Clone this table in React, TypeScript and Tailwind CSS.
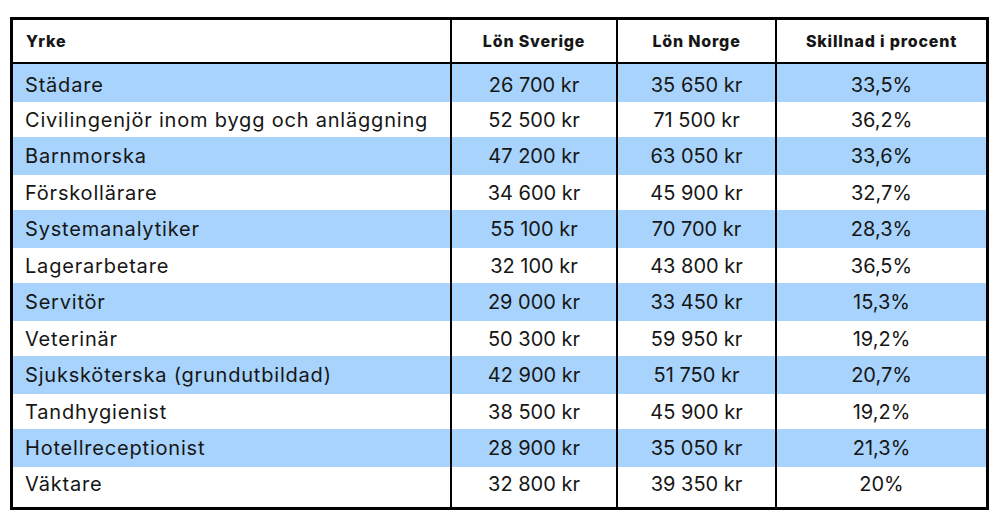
const rows = [
  ["Städare", "26 700 kr", "35 650 kr", "33,5%"],
  ["Civilingenjör inom bygg och anläggning", "52 500 kr", "71 500 kr", "36,2%"],
  ["Barnmorska", "47 200 kr", "63 050 kr", "33,6%"],
  ["Förskollärare", "34 600 kr", "45 900 kr", "32,7%"],
  ["Systemanalytiker", "55 100 kr", "70 700 kr", "28,3%"],
  ["Lagerarbetare", "32 100 kr", "43 800 kr", "36,5%"],
  ["Servitör", "29 000 kr", "33 450 kr", "15,3%"],
  ["Veterinär", "50 300 kr", "59 950 kr", "19,2%"],
  ["Sjuksköterska (grundutbildad)", "42 900 kr", "51 750 kr", "20,7%"],
  ["Tandhygienist", "38 500 kr", "45 900 kr", "19,2%"],
  ["Hotellreceptionist", "28 900 kr", "35 050 kr", "21,3%"],
  ["Väktare", "32 800 kr", "39 350 kr", "20%"],
];

const cols = "grid grid-cols-[437px_2px_164px_2px_157px_2px_209px]";

function Divider() {
  return <div className="h-full bg-black" />;
}

export default function App() {
  return (
    <div className="w-[1000px] h-[526px] bg-white pt-[17px] pl-[10px] font-['Inter',sans-serif] text-[#161616]">
      <div className="w-[979px] border-[3px] border-black">
        <div className={`${cols} h-[42px] items-center text-[16px] font-extrabold tracking-[0.05em]`}>
          <div className="pl-[13px]">Yrke</div>
          <Divider />
          <div className="text-center">Lön Sverige</div>
          <Divider />
          <div className="text-center">Lön Norge</div>
          <Divider />
          <div className="text-center">Skillnad i procent</div>
        </div>
        <div className="h-[2px] bg-black" />
        {rows.map((r, i) => {
          const blue = i % 2 === 0;
          const last = i === rows.length - 1;
          const h = blue ? "h-[38px]" : last ? "h-[40px]" : "h-[35px]";
          const align = last ? "items-start pt-[2px]" : i === 0 ? "items-center pt-[4px]" : "items-center";
          return (
            <div
              key={r[0]}
              className={`${cols} ${h} ${blue ? "bg-[#a7d3fc]" : "bg-white"} text-[20px] leading-[30px]`}
            >
              <div className={`flex pl-[12px] tracking-[0.04em] ${align}`}>{r[0]}</div>
              <Divider />
              <div className={`flex justify-center ${align}`}>{r[1]}</div>
              <Divider />
              <div className={`flex justify-center ${align}`}>{r[2]}</div>
              <Divider />
              <div className={`flex justify-center ${align}`}>{r[3]}</div>
            </div>
          );
        })}
      </div>
    </div>
  );
}
